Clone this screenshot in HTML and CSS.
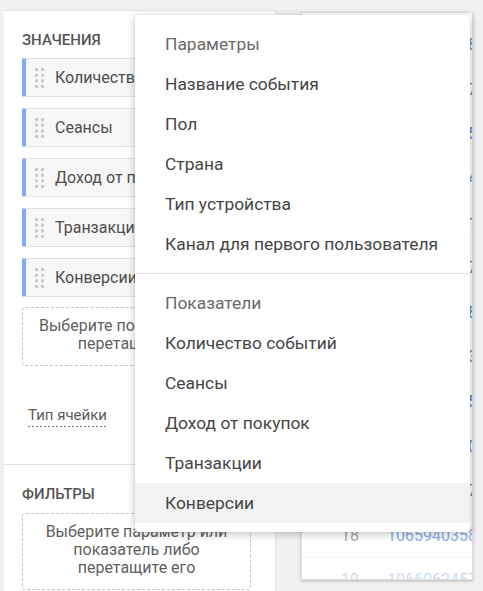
FILE: index.html
```html
<!DOCTYPE html>
<html lang="ru">
<head>
    <meta charset="UTF-8">
    <meta name="viewport" content="width=device-width, initial-scale=1.0">
    <title>Конструктор отчета</title>
    <link rel="stylesheet" href="styles.css">
</head>
<body>
    <div class="page">
        <div class="settings">
            <div class="section">
                <div class="section-title">Значения</div>
                <div class="chip">
                    <svg class="handle" viewBox="0 0 10 20"><g fill="#cacaca"><rect x="0" y="0" width="3" height="3"/><rect x="6" y="0" width="3" height="3"/><rect x="0" y="5.7" width="3" height="3"/><rect x="6" y="5.7" width="3" height="3"/><rect x="0" y="11.4" width="3" height="3"/><rect x="6" y="11.4" width="3" height="3"/><rect x="0" y="17" width="3" height="3"/><rect x="6" y="17" width="3" height="3"/></g></svg>
                    <span class="chip-text">Количество событий</span>
                </div>
                <div class="chip">
                    <svg class="handle" viewBox="0 0 10 20"><g fill="#cacaca"><rect x="0" y="0" width="3" height="3"/><rect x="6" y="0" width="3" height="3"/><rect x="0" y="5.7" width="3" height="3"/><rect x="6" y="5.7" width="3" height="3"/><rect x="0" y="11.4" width="3" height="3"/><rect x="6" y="11.4" width="3" height="3"/><rect x="0" y="17" width="3" height="3"/><rect x="6" y="17" width="3" height="3"/></g></svg>
                    <span class="chip-text">Сеансы</span>
                </div>
                <div class="chip">
                    <svg class="handle" viewBox="0 0 10 20"><g fill="#cacaca"><rect x="0" y="0" width="3" height="3"/><rect x="6" y="0" width="3" height="3"/><rect x="0" y="5.7" width="3" height="3"/><rect x="6" y="5.7" width="3" height="3"/><rect x="0" y="11.4" width="3" height="3"/><rect x="6" y="11.4" width="3" height="3"/><rect x="0" y="17" width="3" height="3"/><rect x="6" y="17" width="3" height="3"/></g></svg>
                    <span class="chip-text">Доход от покупок</span>
                </div>
                <div class="chip">
                    <svg class="handle" viewBox="0 0 10 20"><g fill="#cacaca"><rect x="0" y="0" width="3" height="3"/><rect x="6" y="0" width="3" height="3"/><rect x="0" y="5.7" width="3" height="3"/><rect x="6" y="5.7" width="3" height="3"/><rect x="0" y="11.4" width="3" height="3"/><rect x="6" y="11.4" width="3" height="3"/><rect x="0" y="17" width="3" height="3"/><rect x="6" y="17" width="3" height="3"/></g></svg>
                    <span class="chip-text">Транзакции</span>
                </div>
                <div class="chip">
                    <svg class="handle" viewBox="0 0 10 20"><g fill="#cacaca"><rect x="0" y="0" width="3" height="3"/><rect x="6" y="0" width="3" height="3"/><rect x="0" y="5.7" width="3" height="3"/><rect x="6" y="5.7" width="3" height="3"/><rect x="0" y="11.4" width="3" height="3"/><rect x="6" y="11.4" width="3" height="3"/><rect x="0" y="17" width="3" height="3"/><rect x="6" y="17" width="3" height="3"/></g></svg>
                    <span class="chip-text">Конверсии</span>
                </div>
                <div class="drop-zone">Выберите показатель или<br>перетащите его</div>
                <div class="cell-type"><span>Тип ячейки</span></div>
            </div>
            <div class="section section-filters">
                <div class="section-title">Фильтры</div>
                <div class="drop-zone">Выберите параметр или<br>показатель либо<br>перетащите его</div>
            </div>
        </div>

        <div class="table-card">
            <div class="row"><span class="idx">7</span><span class="val">1065940358.1702</span></div>
            <div class="row"><span class="idx">8</span><span class="val">1065942117.1702</span></div>
            <div class="row"><span class="idx">9</span><span class="val">1065938805.1702</span></div>
            <div class="row"><span class="idx">10</span><span class="val">1065941204.1702</span></div>
            <div class="row"><span class="idx">11</span><span class="val">1065937761.1702</span></div>
            <div class="row"><span class="idx">12</span><span class="val">1065943327.1702</span></div>
            <div class="row"><span class="idx">13</span><span class="val">1065939418.1702</span></div>
            <div class="row"><span class="idx">14</span><span class="val">1065944053.1702</span></div>
            <div class="row"><span class="idx">15</span><span class="val">1065936195.1702</span></div>
            <div class="row"><span class="idx">16</span><span class="val">1065945560.1702</span></div>
            <div class="row"><span class="idx">17</span><span class="val">1065938127.1702</span></div>
            <div class="row"><span class="idx">18</span><span class="val">1065940358.1702</span></div>
            <div class="row"><span class="idx">19</span><span class="val">1066062457.1702</span></div>
        </div>
    </div>

    <div class="menu">
        <div class="menu-group">
            <div class="menu-item menu-label">Параметры</div>
            <div class="menu-item">Название события</div>
            <div class="menu-item">Пол</div>
            <div class="menu-item">Страна</div>
            <div class="menu-item">Тип устройства</div>
            <div class="menu-item">Канал для первого пользователя</div>
        </div>
        <div class="menu-group">
            <div class="menu-item menu-label">Показатели</div>
            <div class="menu-item">Количество событий</div>
            <div class="menu-item">Сеансы</div>
            <div class="menu-item">Доход от покупок</div>
            <div class="menu-item">Транзакции</div>
            <div class="menu-item hover">Конверсии</div>
        </div>
    </div>
</body>
</html>
```

FILE: styles.css
```css
* {
    box-sizing: border-box;
}
body {
    margin: 0;
    background-color: #f1f1f1;
    font-family: Roboto, "Noto Sans", sans-serif;
    color: #4a4a4a;
    overflow: hidden;
}
.page {
    display: flex;
    align-items: flex-start;
    gap: 25px;
    padding: 10px 0 0 4px;
    height: 591px;
    overflow: hidden;
}
.settings {
    flex-shrink: 0;
    width: 272px;
    min-height: 600px;
    background: #fff;
    border-top: 1px solid #e3e3e3;
    border-right: 1px solid #e3e3e3;
}
.section {
    padding: 21px 24px 41px 18px;
}
.section-filters {
    border-top: 1px solid #e3e3e3;
    padding-top: 21px;
}
.section-title {
    font-size: 15px;
    font-weight: 500;
    line-height: 16px;
    text-transform: uppercase;
    color: #555;
    margin-bottom: 10px;
}
.section-filters .section-title {
    margin-bottom: 12px;
}
.chip {
    display: flex;
    align-items: center;
    height: 39px;
    margin-bottom: 11px;
    padding-left: 9px;
    background: #f7f7f7;
    border: 1px solid #e2e2e2;
    border-left: 4px solid #7eaaf6;
    border-radius: 2px;
    white-space: nowrap;
    overflow: hidden;
}
.handle {
    flex-shrink: 0;
    width: 10px;
    height: 20px;
    margin-right: 10px;
}
.chip-text {
    font-size: 16px;
    color: #4d4d4d;
}
.drop-zone {
    margin-top: -1px;
    padding: 9px 6px 12px;
    border: 1px dashed #c4c4c4;
    border-radius: 4px;
    text-align: center;
    font-size: 16px;
    line-height: 18px;
    color: #5f5f5f;
}
.cell-type {
    margin: 41px 0 0 6px;
    font-size: 15px;
    line-height: 16px;
}
.cell-type span {
    padding-bottom: 3px;
    color: #5a5a5a;
    background: linear-gradient(to right, #777 50%, transparent 50%) left bottom / 4px 1px repeat-x;
}
.table-card {
    position: relative;
    flex-shrink: 0;
    width: 172px;
    height: 568px;
    margin-top: 2px;
    padding-top: 10px;
    background: #fff;
    border: 1px solid #e0e0e0;
    box-shadow: 0 1px 3px rgba(0,0,0,0.25);
    overflow: hidden;
}
.table-card::after {
    content: "";
    position: absolute;
    left: 0;
    right: 0;
    bottom: 0;
    height: 80px;
    background: linear-gradient(rgba(255,255,255,0), rgba(255,255,255,0.75));
}
.row {
    display: flex;
    align-items: center;
    height: 44.6px;
    border-bottom: 1px solid #eeeeee;
    font-size: 16px;
    white-space: nowrap;
}
.idx {
    flex-shrink: 0;
    width: 57px;
    text-align: right;
    color: #757575;
}
.val {
    margin-left: 28px;
    color: #4a7fd6;
}
.menu {
    position: absolute;
    left: 135px;
    top: 15px;
    width: 335px;
    background: #fff;
    border-radius: 4px;
    box-shadow: 0 2px 8px rgba(0,0,0,0.24), 0 0 2px rgba(0,0,0,0.08);
}
.menu-group {
    padding: 9px 0;
}
.menu-group + .menu-group {
    border-top: 1px solid #e0e0e0;
}
.menu-item {
    height: 40px;
    line-height: 40px;
    padding-left: 30px;
    font-size: 17.4px;
    color: #454545;
    white-space: nowrap;
}
.menu-label {
    color: #6a6a6a;
}
.menu-item.hover {
    background: #f2f2f2;
}
```
